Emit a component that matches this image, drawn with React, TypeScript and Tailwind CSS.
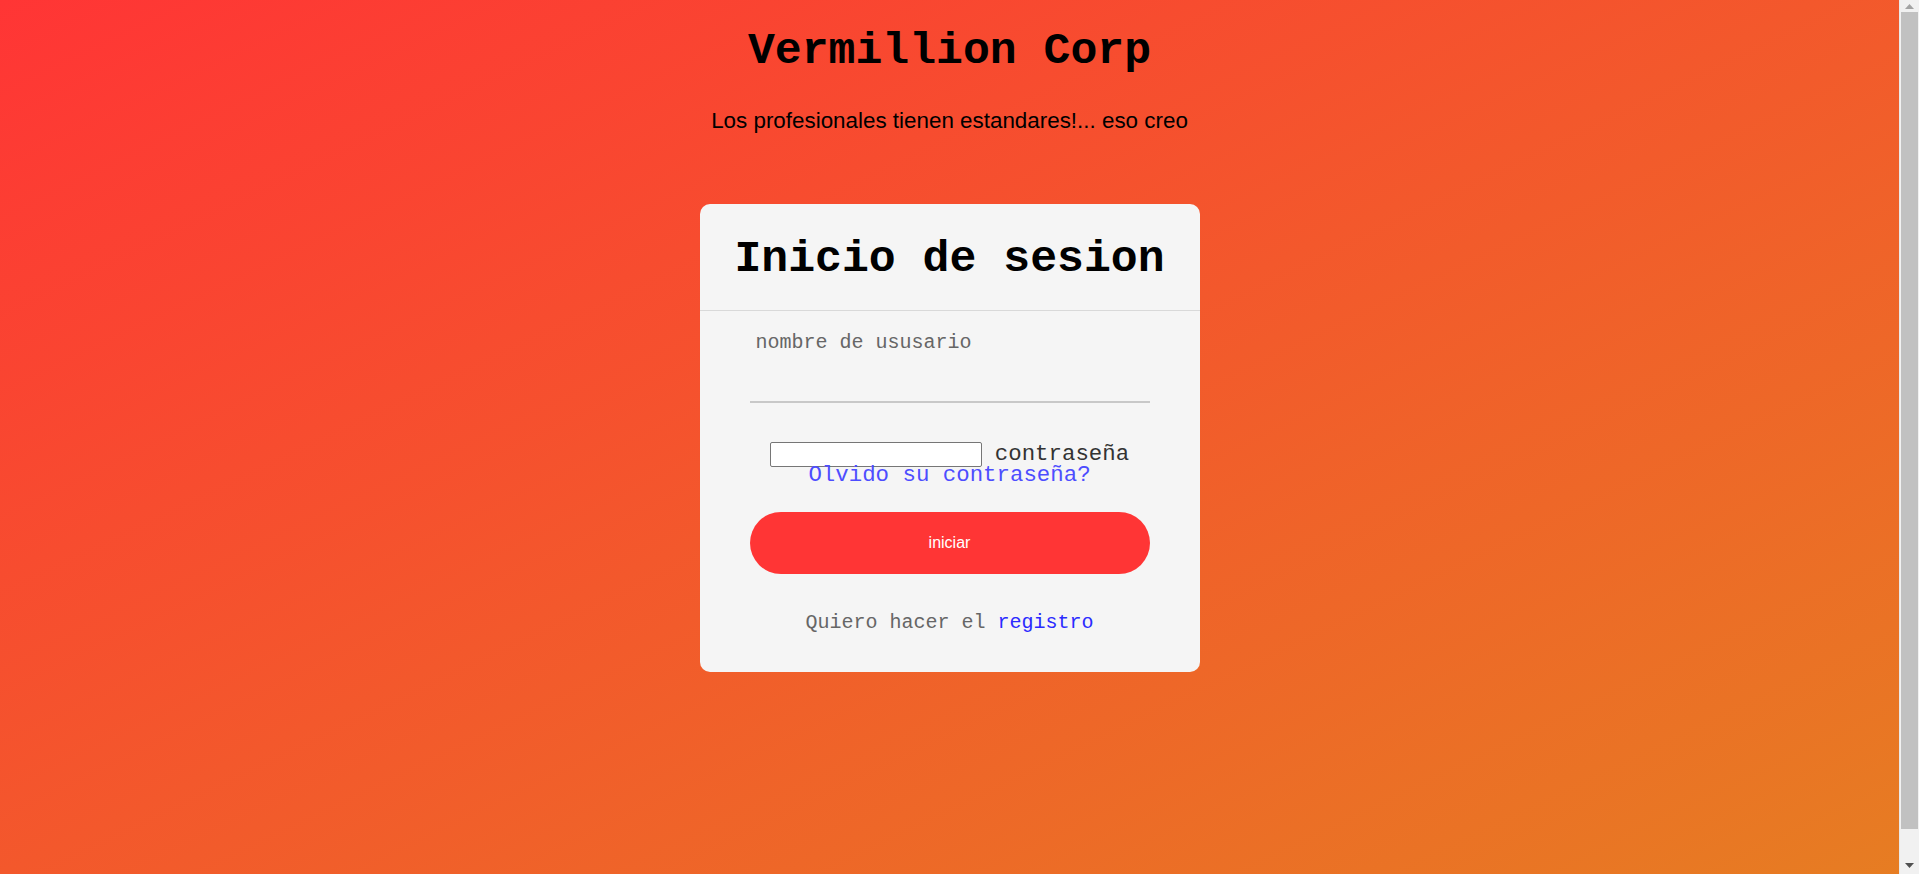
export default function App() {
  return (
    <div className="flex h-[874px] w-full overflow-hidden">
      <div className="flex min-w-0 flex-1 flex-col items-center bg-[linear-gradient(to_bottom_right,#ff3535,#e67e22)] bg-[length:100%_911px] bg-no-repeat pt-[26px] h-[911px]">
        <h1 className="font-['Liberation_Mono','Courier_New',monospace] font-bold text-[44.8px] leading-[51px] text-black">
          Vermillion Corp
        </h1>
        <p className="mt-[31px] font-['Liberation_Sans',Arial,sans-serif] text-[22.4px] leading-[25px] text-black">
          Los profesionales tienen estandares!... eso creo
        </p>
        <div className="mt-[71px] w-[500px] rounded-[10px] bg-[#f5f5f5] font-['Liberation_Mono','Courier_New',monospace]">
          <div className="border-b border-[#d9d9d9] pt-[30px] pb-[25px] text-center font-bold text-[44.8px] leading-[51px] text-black">
            Inicio de sesion
          </div>
          <div className="px-[50px] pt-[20px] pb-[38px]">
            <div className="border-b-2 border-[#c8c8c8]">
              <div className="ml-[6px] text-[20px] leading-[23px] text-[#666666]">nombre de ususario</div>
              <input type="text" className="block h-[47px] w-full bg-transparent outline-none" />
            </div>
            <div className="mt-[39px] flex h-[25px] items-center justify-center">
              <input
                type="password"
                className="h-[25px] w-[212px] rounded-[2px] border border-[#767676] bg-white"
              />
              <span className="ml-[13px] text-[22.4px] leading-[25px] text-[#333333]">contraseña</span>
            </div>
            <div className="mt-[-4px] text-center text-[22.4px] leading-[24px]">
              <a href="#" className="text-[#4d4dff]">Olvido su contraseña?</a>
            </div>
            <button className="mt-[25px] flex h-[62px] w-full items-center justify-center rounded-full bg-[#ff3535] font-['Liberation_Sans',Arial,sans-serif] text-[16px] text-white">
              iniciar
            </button>
            <div className="mt-[37px] text-center text-[20px] leading-[23px] text-[#666666]">
              Quiero hacer el <a href="#" className="text-[#2b2bff]">registro</a>
            </div>
          </div>
        </div>
      </div>
      <div className="flex h-[874px] w-[20px] shrink-0 flex-col border-l border-[#e8e8e8] bg-[#f1f1f1]">
        <div className="flex h-[12px] items-center justify-center pt-[1px]">
          <svg width="9" height="5" viewBox="0 0 9 5">
            <polygon points="4.5,0 9,5 0,5" fill="#a3a3a3" />
          </svg>
        </div>
        <div className="mx-auto h-[817px] w-[17px] bg-[#c1c1c1]" />
        <div className="flex flex-1 items-end justify-center pb-[6px]">
          <svg width="9" height="5" viewBox="0 0 9 5">
            <polygon points="0,0 9,0 4.5,5" fill="#505050" />
          </svg>
        </div>
      </div>
    </div>
  );
}
